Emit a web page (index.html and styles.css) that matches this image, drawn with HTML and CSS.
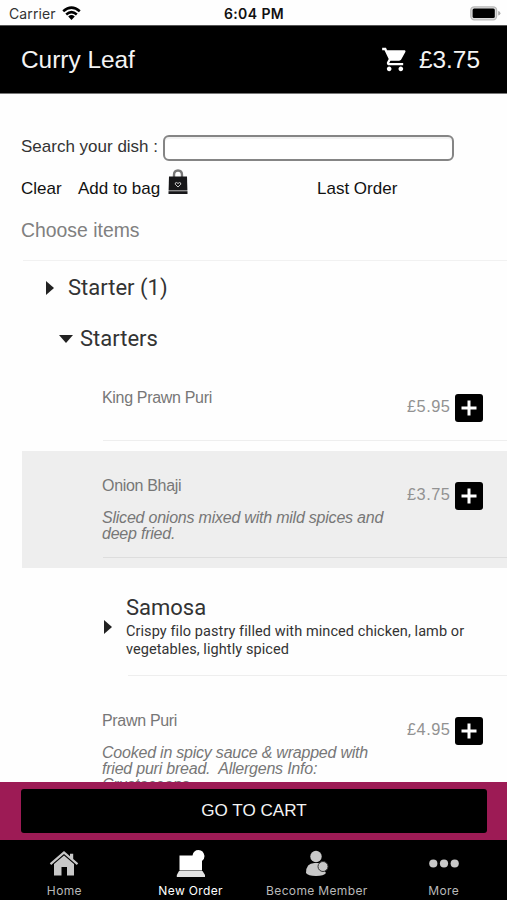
FILE: index.html
```html
<!DOCTYPE html>
<html lang="en">
<head>
<meta charset="utf-8">
<title>Curry Leaf</title>
<link rel="stylesheet" href="styles.css">
</head>
<body>
<div class="app">
  <div class="status">
    <div class="carrier"><span>Carrier</span>
      <svg width="19" height="15" viewBox="0 0 19 15"><g fill="none" stroke="#000" stroke-width="2.6"><path d="M1.2 5.2Q9.5-1.8 17.8 5.2"/><path d="M4.2 8.4Q9.5 3.9 14.8 8.4"/></g><path d="M6.2 10.4Q9.5 7.8 12.8 10.4L9.5 14Z"/></svg>
    </div>
    <div class="time">6:04 PM</div>
    <svg class="battery" width="31" height="15" viewBox="0 0 31 15"><rect x=".8" y=".8" width="25.8" height="13" rx="3.500" fill="#ddd" stroke="#bbb" stroke-width="1.3"/><rect x="2.6" y="2.6" width="22.2" height="9.4" rx="1.500" fill="#000"/><path d="M28.2 5Q30.4 5.6 30.4 7.3T28.2 9.6Z" fill="#aaa"/></svg>
  </div>
  <header class="header">
    <h1>Curry Leaf</h1>
    <div class="total">
      <svg width="28" height="29" viewBox="0 0 24 24" fill="#fff"><path d="M7 18c-1.1 0-1.99.9-1.99 2S5.900 22 7 22s2-.9 2-2-.9-2-2-2zM1 2v2h2l3.600 7.590-1.350 2.450c-.16.280-.250.610-.250.960 0 1.100.9 2 2 2h12v-2H7.420c-.14 0-.25-.11-.25-.25l.03-.12.900-1.630h7.450c.75 0 1.410-.41 1.750-1.030l3.580-6.490c.08-.14.120-.31.120-.48 0-.55-.45-1-1-1H5.210l-.94-2H1zm16 16c-1.100 0-1.990.9-1.990 2s.890 2 1.990 2 2-.9 2-2-.9-2-2-2z"/></svg>
      <span>£3.75</span>
    </div>
  </header>
  <main class="content">
    <label class="search"><span>Search your dish :</span><input type="text"></label>
    <div class="actions">
      <span class="clear">Clear</span><span class="bag-label">Add to bag</span>
      <svg class="bag" width="20" height="26" viewBox="0 0 20 26"><path d="M6 9V6Q6 1.500 10 1.500T14 6V9" fill="none" stroke="#777" stroke-width="2.400"/><path d="M1 7.500H19L19.400 21.500H.6Z" fill="#171719"/><path d="M.5 22.200H19.500V25H.5Z" fill="#171719"/><path d="M10 18L7.200 15.200Q7 13.400 8.600 13.500L10 14.500 11.400 13.500Q13 13.400 12.800 15.200Z" fill="none" stroke="#ccc" stroke-width="1"/></svg>
      <span class="last">Last Order</span>
    </div>
    <div class="choose">Choose items</div>
    <div class="group first"><svg class="right" viewBox="0 0 8 14"><path d="M0 0L8 7 0 14Z"/></svg><h2>Starter (1)</h2></div>
    <div class="group second"><svg class="down" viewBox="0 0 14 8"><path d="M0 0H14L7 8Z"/></svg><h2>Starters</h2></div>
    <div class="item king">
      <div class="info"><div class="name">King Prawn Puri</div></div>
      <div class="price">£5.95</div><button class="add"><svg viewBox="0 0 28 28"><path d="M14 6.500V21.500M6.500 14H21.500"/></svg></button>
    </div>
    <div class="item onion">
      <div class="info"><div class="name">Onion Bhaji</div><div class="desc">Sliced onions mixed with mild spices and<br>deep fried.</div></div>
      <div class="price">£3.75</div><button class="add"><svg viewBox="0 0 28 28"><path d="M14 6.500V21.500M6.500 14H21.500"/></svg></button>
    </div>
    <div class="samosa">
      <svg class="right" viewBox="0 0 8 14"><path d="M0 0L8 7 0 14Z"/></svg>
      <div class="samosa-text"><h3>Samosa</h3><p>Crispy filo pastry filled with minced chicken, lamb or<br>vegetables, lightly spiced</p></div>
    </div>
    <div class="item prawn">
      <div class="info"><div class="name">Prawn Puri</div><div class="desc">Cooked in spicy sauce &amp; wrapped with<br>fried puri bread.&nbsp; Allergens Info:<br>Crustaceans</div></div>
      <div class="price">£4.95</div><button class="add"><svg viewBox="0 0 28 28"><path d="M14 6.500V21.500M6.500 14H21.500"/></svg></button>
    </div>
  </main>
  <div class="cart-bar"><button class="cart">GO TO CART</button></div>
  <nav class="tabs">
    <div class="tab home"><svg width="30" height="28" viewBox="0 0 30 28" fill="#c8c8c8"><path d="M15 1L.8 13.300 2.200 14.900 15 4 27.800 14.900 29.200 13.300 24.200 9V3.800H21V6.200Z"/><path d="M5 14L15 5.600 25 14V25.500H18V17H12.500V25.500H5Z"/></svg><span>Home</span></div>
    <div class="tab order active"><svg width="30" height="28" viewBox="0 0 30 28"><path d="M3.500 5.500H16.500Q17.500 0 22.500 0T28.500 6Q28.500 9.500 26 11V20.500H3.500Z" fill="#fff"/><path d="M3 21H26.500L29 25V27H.8V25Z" fill="#e2e2e2"/></svg><span>New Order</span></div>
    <div class="tab member"><svg width="30" height="28" viewBox="0 0 30 28" fill="#c8c8c8"><circle cx="14" cy="6.500" r="5.700"/><path d="M4 23Q4 13 12.500 13H17L24 23Q22 26 14 26T4 23Z"/><circle cx="21" cy="16.500" r="5" stroke="#333" stroke-width="1"/></svg><span>Become Member</span></div>
    <div class="tab more"><svg width="30" height="28" viewBox="0 0 30 28" fill="#c8c8c8"><circle cx="4.300" cy="13.500" r="4.100"/><circle cx="15" cy="13.500" r="4.100"/><circle cx="25.700" cy="13.500" r="4.100"/></svg><span>More</span></div>
  </nav>
</div>
</body>
</html>
```
FILE: styles.css
```css
* { box-sizing: border-box; }
body { margin: 0; background: #fefefe; font-family: "Liberation Sans", sans-serif; }
h1, h2, h3, p { margin: 0; font-weight: 400; }
button { border: 0; padding: 0; font: inherit; }
svg { display: block; flex: none; }
.app { width: 507px; height: 900px; display: flex; flex-direction: column; overflow: hidden; white-space: nowrap; }
.status { height: 25px; flex: none; display: grid; grid-template-columns: 1fr auto 1fr; align-items: center; padding: 2px 6px 0 9px; font: 14px/23px Inter, sans-serif; color: #333; }
.carrier { display: flex; gap: 6px; align-items: center; letter-spacing: .1px; }
.time { color: #111; font-weight: 600; letter-spacing: .4px; padding-right: 2px; }
.battery { justify-self: end; }
.header { height: 69px; flex: none; background: #000; border-top: 1px solid #555; border-bottom: 1px solid #777; color: #f4f4f4; padding: 0 27px 0 21px; display: flex; align-items: center; justify-content: space-between; font-size: 24.4px; }
.header h1 { font-size: 24.4px; }
.total { display: flex; align-items: center; gap: 10px; }
.content { height: 688px; flex: none; overflow: hidden; }
.search { display: flex; height: 27px; margin: 41px 0 0 21px; font-size: 17px; line-height: 24px; color: #333; }
.search span { width: 142px; }
.search input { width: 291px; height: 26px; border: 2px solid #858585; border-radius: 6px; background: #fff; box-shadow: inset 0 2px 1px #f0f0f0; }
.actions { height: 27px; margin: 7px 0 0 21px; display: flex; font-size: 17px; line-height: 39px; color: #111; }
.clear { width: 57px; }
.bag-label { width: 90px; }
.last { margin-left: 129px; }
.choose { margin: 11px 0 0 21px; padding-top: 10px; height: 53px; line-height: 27px; font-size: 19.4px; color: #808080; }
.group { font-family: Roboto, sans-serif; display: flex; align-items: center; color: #333; fill: #222; }
.group h2 { font-size: 22px; }
.right { width: 8px; height: 14px; fill: #222; }
.down { width: 14px; height: 8px; }
.first { border-top: 1px solid #f1f1f1; height: 54px; margin-left: 23px; padding-left: 23px; gap: 14px; }
.second { height: 49px; padding-left: 59px; gap: 7px; }
.item { display: grid; grid-template-columns: 305px 48px 28px; margin-left: 22px; padding-left: 80px; position: relative; color: #777; }
.item::after { content: ""; position: absolute; left: 81px; right: 0; bottom: 10px; height: 1px; background: #eee; }
.king { height: 88px; padding-top: 25px; }
.onion { height: 117px; padding-top: 25px; background: #eee; }
.onion::after { background: #ddd; }
.prawn { height: 140px; padding-top: 35px; }
.name { font-size: 16px; line-height: 20px; letter-spacing: -.32px; }
.price { font-size: 16.4px; line-height: 20px; padding-top: 8px; color: #929292; letter-spacing: .45px; }
.desc { font-size: 16px; line-height: 16px; font-style: italic; margin-top: 14px; letter-spacing: -.22px; }
.add { width: 28px; height: 28px; border-radius: 3px; background: #000; margin-top: 6px; }
.add path { stroke: #fff; stroke-width: 3; }
.samosa { height: 108px; margin-left: 104px; position: relative; display: flex; align-items: center; gap: 14px; padding-top: 10px; color: #333; font-family: Roboto, sans-serif; }
.samosa::after { content: ""; position: absolute; left: 24px; right: 0; bottom: 0; height: 1px; background: #eee; }
.samosa h3 { font-size: 22px; line-height: 26px; margin-bottom: 2px; }
.samosa p { font-size: 14.5px; line-height: 18px; letter-spacing: .08px; }
.cart-bar { height: 58px; flex: none; background: #9d1b55; padding: 7px 20px 7px 21px; }
.cart { display: block; width: 466px; height: 44px; border-radius: 3px; color: #f4f4f4; background: #000; font-size: 17.1px; }
.tabs { height: 60px; flex: none; background: #000; display: grid; grid-template-columns: repeat(4, 1fr); color: #b9b9b9; font: 12px/15px Inter, sans-serif; letter-spacing: .35px; }
.tab { display: flex; flex-direction: column; align-items: center; padding-top: 10px; }
.tab span { margin-top: 5px; }
.home { padding-left: 2px; }
.order { padding-left: 1px; }
.active { color: #fff; }
```
